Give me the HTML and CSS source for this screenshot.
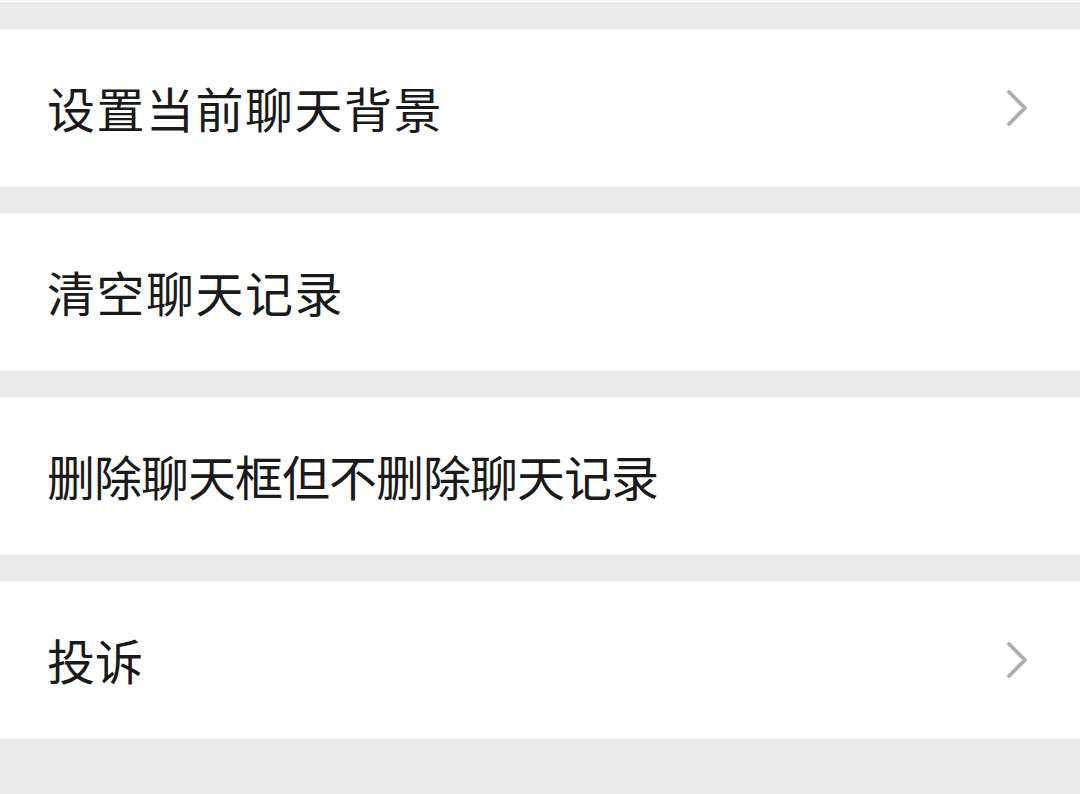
FILE: index.html
```
<!DOCTYPE html>
<html lang="zh">
<head>
<meta charset="utf-8">
<link rel="stylesheet" href="styles.css">
</head>
<body>
<div class="page">
  <div class="topstrip"></div>
  <div class="list">
    <div class="row">
      <span class="label label-wide">设置当前聊天背景</span>
      <svg class="chev" viewBox="0 0 22 38" width="22" height="38"><polyline points="3,3 19,19 3,35" fill="none" stroke="#b0b0b0" stroke-width="3.8" stroke-linecap="round" stroke-linejoin="round"/></svg>
    </div>
    <div class="row">
      <span class="label label-wide">清空聊天记录</span>
    </div>
    <div class="row">
      <span class="label label-tight">删除聊天框但不删除聊天记录</span>
    </div>
    <div class="row">
      <span class="label">投诉</span>
      <svg class="chev" viewBox="0 0 22 38" width="22" height="38"><polyline points="3,3 19,19 3,35" fill="none" stroke="#b0b0b0" stroke-width="3.8" stroke-linecap="round" stroke-linejoin="round"/></svg>
    </div>
  </div>
</div>
</body>
</html>
```
FILE: styles.css
```
html, body {
  margin: 0;
  padding: 0;
  background: #ececec;
  height: 100%;
}
.page {
  width: 1080px;
  height: 794px;
  overflow: hidden;
  font-family: "Noto Sans CJK SC", "Noto Sans", sans-serif;
}
.topstrip {
  height: 3px;
  background: #f6f6f6;
  border-bottom: 1px solid #e2e2e2;
}
.list {
  display: flex;
  flex-direction: column;
  gap: 24px;
  padding-top: 24px;
}
.row {
  height: 158px;
  background: #fff;
  border-top: 1px solid #e4e4e4;
  border-bottom: 1px solid #e4e4e4;
  display: flex;
  align-items: center;
  justify-content: space-between;
  padding: 0 52px 0 47px;
}
.label {
  font-size: 48px;
  color: #1a1a1a;
  line-height: 1;
  padding-bottom: 3px;
}
.label-wide {
  letter-spacing: 1.5px;
}
.label-tight {
  letter-spacing: -1px;
}
.chev {
  display: block;
}
```
